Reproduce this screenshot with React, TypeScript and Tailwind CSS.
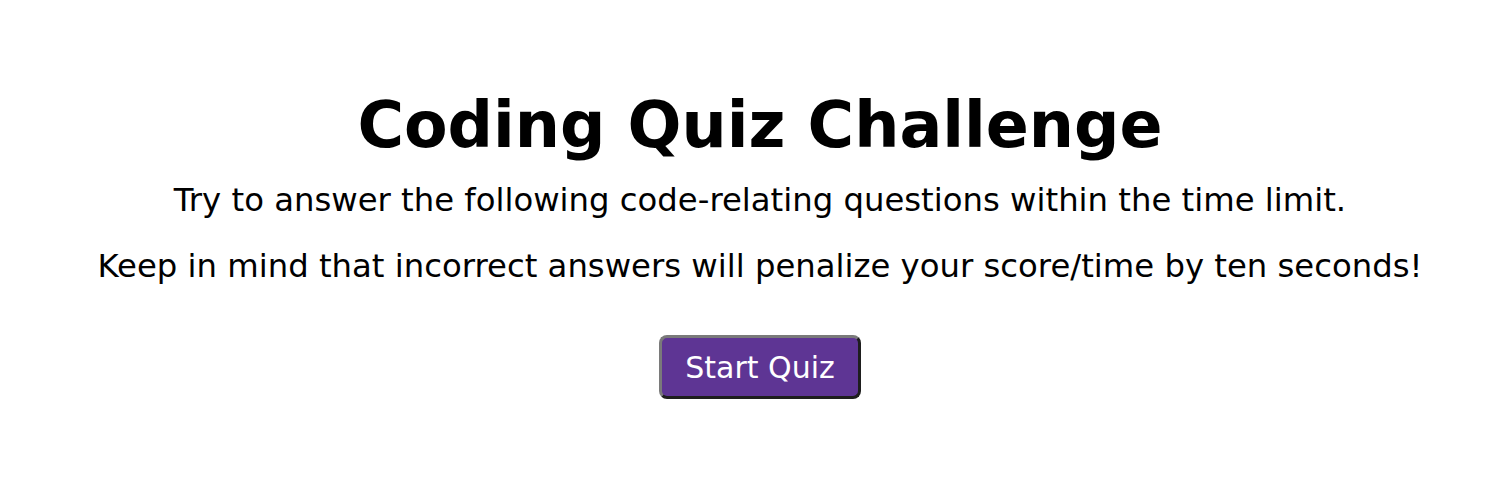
export default function App() {
  return (
    <div className="w-[1498px] h-[492px] pl-[22px] bg-white flex flex-col items-center text-black" style={{ fontFamily: '"DejaVu Sans", Verdana, sans-serif' }}>
      <h1 className="mt-[85px] text-[63.5px] font-bold leading-[80px]">Coding Quiz Challenge</h1>
      <p className="mt-[15px] text-[32.3px] leading-[40px]">Try to answer the following code-relating questions within the time limit.</p>
      <p className="mt-[26px] text-[32.3px] leading-[40px]">Keep in mind that incorrect answers will penalize your score/time by ten seconds!</p>
      <button className="mt-[49px] h-[64px] px-[23px] rounded-[8px] border-[3px] border-t-[#7a7a7a] border-l-[#7a7a7a] border-b-[#1e1e1e] border-r-[#1e1e1e] bg-[#5e3594] text-white text-[30px] leading-[35px]">Start Quiz</button>
    </div>
  );
}
